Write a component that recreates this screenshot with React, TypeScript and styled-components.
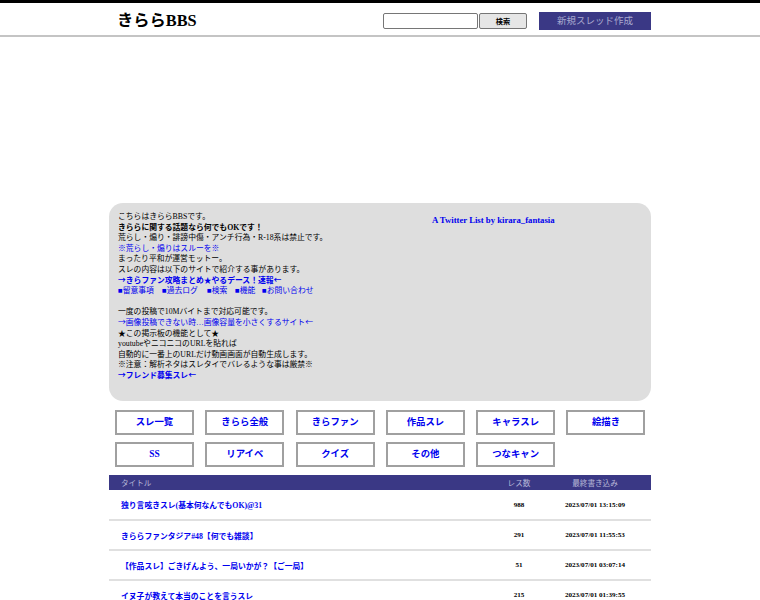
import React from "react";
import styled, { createGlobalStyle } from "styled-components";

const GlobalStyle = createGlobalStyle`
  html, body {
    margin: 0;
    padding: 0;
    background: #fff;
    overflow: hidden;
    font-family: "Liberation Serif", "Noto Sans CJK JP", serif;
    color: #000;
  }
  a {
    color: #0000ee;
    text-decoration: none;
  }
`;

const Header = styled.header`
  height: 32px;
  border-top: 3px solid #000;
  border-bottom: 2px solid #c4c4c4;
  display: flex;
  justify-content: center;
`;

const HeaderInner = styled.div`
  box-sizing: border-box;
  width: 542px;
  padding: 4px 0 0 8px;
  display: flex;
  align-items: center;
`;

const Logo = styled.h1`
  margin: 0;
  font-size: 16.3px;
  font-weight: bold;
  line-height: 28px;
  flex: 1;
`;

const SearchInput = styled.input`
  box-sizing: border-box;
  width: 95px;
  height: 16px;
  padding: 0 2px;
  border: 1px solid #767676;
  border-radius: 2px;
  background: #fff;
`;

const SearchButton = styled.button`
  box-sizing: border-box;
  width: 48px;
  height: 16px;
  margin-left: 1px;
  padding: 0;
  border: 1px solid #767676;
  border-radius: 2px;
  background: #e6e6e6;
  font-family: inherit;
  font-size: 7.2px;
  font-weight: bold;
  color: #000;
`;

const NewThreadLink = styled.a`
  box-sizing: border-box;
  width: 112px;
  height: 18px;
  margin-left: 12px;
  background: #3a3885;
  color: #a9a9cf;
  font-size: 9.5px;
  line-height: 18px;
  text-align: center;
`;

const Main = styled.main`
  width: 542px;
  margin: 166px auto 0;
`;

const InfoBox = styled.section`
  box-sizing: border-box;
  height: 198px;
  padding: 9px 9px;
  display: flex;
  background: #dedede;
  border-radius: 14px;
`;

const InfoText = styled.div`
  width: 270px;
  flex: none;
  font-size: 7.8px;
  line-height: 10.6px;
  white-space: nowrap;
`;

const Line = styled.div<{ $bold?: boolean }>`
  height: 10.6px;
  font-weight: ${(p) => (p.$bold ? "bold" : "normal")};
`;

const BoldLink = styled.a`
  font-weight: bold;
`;

const WideGlyph = styled.span`
  font-family: "Noto Sans CJK JP", sans-serif;
  line-height: 0;
`;

const LinkGroup = styled.div`
  display: flex;
  line-height: 10.6px;
`;

const GroupLink = styled.a<{ $width: number }>`
  width: ${(p) => p.$width}px;
  flex: none;
`;

const TwitterList = styled.a`
  margin: 2px 0 0 44px;
  font-size: 8.7px;
  line-height: 12px;
  font-weight: bold;
  white-space: nowrap;
  align-self: flex-start;
`;

const NavGrid = styled.nav`
  display: grid;
  grid-template-columns: repeat(6, 79px);
  column-gap: 11.3px;
  row-gap: 7px;
  padding: 9px 6px 8px;
`;

const NavButton = styled.a`
  box-sizing: border-box;
  height: 25px;
  border: 2px solid #a0a0a0;
  font-size: 9.4px;
  font-weight: bold;
  line-height: 21px;
  text-align: center;
  color: #0000ee;
`;

const ThreadTable = styled.table`
  width: 542px;
  border-collapse: collapse;
  table-layout: fixed;
`;

const HeadCell = styled.th<{ $left?: boolean; $width?: number }>`
  height: 15px;
  padding: 0 ${(p) => (p.$left ? "12px" : "0")};
  width: ${(p) => (p.$width ? `${p.$width}px` : "auto")};
  background: #3a3885;
  color: #b8b8d8;
  font-size: 7.6px;
  font-weight: normal;
  text-align: ${(p) => (p.$left ? "left" : "center")};
`;

const Row = styled.tr`
  height: 30px;
  border-bottom: 2px solid #e0e0e0;
`;

const TitleCell = styled.td`
  padding: 0 12px;
  font-size: 7.8px;
  font-weight: bold;
  white-space: nowrap;
`;

const DataCell = styled.td`
  padding: 0;
  font-size: 7.1px;
  font-weight: bold;
  text-align: center;
`;

const navItems = [
  "スレ一覧",
  "きらら全般",
  "きらファン",
  "作品スレ",
  "キャラスレ",
  "絵描き",
  "SS",
  "リアイベ",
  "クイズ",
  "その他",
  "つなキャン",
];

const threads = [
  { title: "独り言呟きスレ(基本何なんでもOK)@31", res: 988, date: "2023/07/01 13:15:09" },
  { title: "きららファンタジア#48【何でも雑談】", res: 291, date: "2023/07/01 11:55:53" },
  { title: "【作品スレ】ごきげんよう、一局いかが？【ご一局】", res: 51, date: "2023/07/01 03:07:14" },
  { title: "イヌ子が教えて本当のことを言うスレ", res: 215, date: "2023/07/01 01:39:55" },
];

export default function App() {
  return (
    <>
      <GlobalStyle />
      <Header>
        <HeaderInner>
          <Logo>きららBBS</Logo>
          <SearchInput type="text" />
          <SearchButton type="button">検索</SearchButton>
          <NewThreadLink href="#">新規スレッド作成</NewThreadLink>
        </HeaderInner>
      </Header>
      <Main>
        <InfoBox>
          <InfoText>
            <Line>こちらはきららBBSです。</Line>
            <Line $bold>きららに関する話題なら何でもOKです！</Line>
            <Line>荒らし・煽り・誹謗中傷・アンチ行為・R-18系は禁止です。</Line>
            <Line><a href="#">※荒らし・煽りはスルーを※</a></Line>
            <Line>まったり平和が運営モットー。</Line>
            <Line>スレの内容は以下のサイトで紹介する事があります。</Line>
            <Line><BoldLink href="#"><WideGlyph>→</WideGlyph>きらファン攻略まとめ★やるデース！速報<WideGlyph>←</WideGlyph></BoldLink></Line>
            <LinkGroup>
              <GroupLink href="#" $width={44}>■留意事項</GroupLink>
              <GroupLink href="#" $width={45}>■過去ログ</GroupLink>
              <GroupLink href="#" $width={28}>■検索</GroupLink>
              <GroupLink href="#" $width={27}>■機能</GroupLink>
              <GroupLink href="#" $width={60}>■お問い合わせ</GroupLink>
            </LinkGroup>
            <Line />
            <Line>一度の投稿で10Mバイトまで対応可能です。</Line>
            <Line><a href="#"><WideGlyph>→</WideGlyph>画像投稿できない時…画像容量を小さくするサイト<WideGlyph>←</WideGlyph></a></Line>
            <Line>★この掲示板の機能として★</Line>
            <Line>youtubeやニコニコのURLを貼れば</Line>
            <Line>自動的に一番上のURLだけ動画画面が自動生成します。</Line>
            <Line>※注意：解析ネタはスレタイでバレるような事は厳禁※</Line>
            <Line><BoldLink href="#"><WideGlyph>→</WideGlyph>フレンド募集スレ<WideGlyph>←</WideGlyph></BoldLink></Line>
          </InfoText>
          <TwitterList href="#">A Twitter List by kirara_fantasia</TwitterList>
        </InfoBox>
        <NavGrid>
          {navItems.map((item) => (
            <NavButton href="#" key={item}>{item}</NavButton>
          ))}
        </NavGrid>
        <ThreadTable>
          <thead>
            <tr>
              <HeadCell $left>タイトル</HeadCell>
              <HeadCell $width={40}>レス数</HeadCell>
              <HeadCell $width={112}>最終書き込み</HeadCell>
            </tr>
          </thead>
          <tbody>
            {threads.map((t) => (
              <Row key={t.title}>
                <TitleCell><a href="#">{t.title}</a></TitleCell>
                <DataCell>{t.res}</DataCell>
                <DataCell>{t.date}</DataCell>
              </Row>
            ))}
          </tbody>
        </ThreadTable>
      </Main>
    </>
  );
}
